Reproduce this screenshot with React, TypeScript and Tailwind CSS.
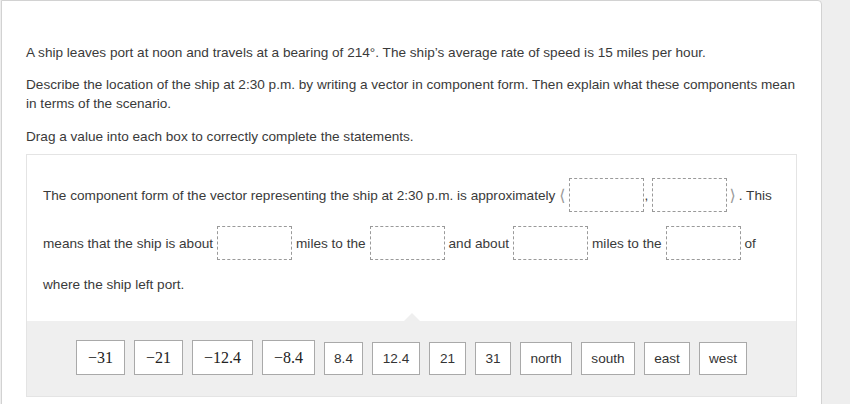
import React from "react";

const font = { fontFamily: '"Liberation Sans", Arial, sans-serif' };

function DropBox() {
  return <span className="inline-block h-[34px] w-[75px] shrink-0 border border-dashed border-[#9a9a9a] bg-white" />;
}

type Tile = { label: string; w: string; math?: boolean };

const tiles: Tile[] = [
  { label: "\u221231", w: "w-[49px]", math: true },
  { label: "\u221221", w: "w-[49px]", math: true },
  { label: "\u221212.4", w: "w-[61px]", math: true },
  { label: "\u22128.4", w: "w-[53px]", math: true },
  { label: "8.4", w: "w-[39px]" },
  { label: "12.4", w: "w-[48px]" },
  { label: "21", w: "w-[37px]" },
  { label: "31", w: "w-[36px]" },
  { label: "north", w: "w-[52px]" },
  { label: "south", w: "w-[54px]" },
  { label: "east", w: "w-[46px]" },
  { label: "west", w: "w-[48px]" },
];

export default function App() {
  return (
    <div className="flex h-[404px] w-[850px] overflow-hidden bg-[#eeeeee] pl-px" style={font}>
      <div className="h-[420px] w-[821px] rounded-tr-[4px] border border-[#d2d2d2] bg-white px-[24px] pt-[42px] text-[13.6px] leading-[19px] text-[#3a3a3a]">
        <p className="mb-[13px] whitespace-nowrap">
          A ship leaves port at noon and travels at a bearing of 214°. The ship’s average rate of speed is 15 miles per hour.
        </p>
        <p className="mb-[14px]">
          <span className="whitespace-nowrap">
            Describe the location of the ship at 2:30 p.m. by writing a vector in component form. Then explain what these components mean
          </span>
          <br />
          in terms of the scenario.
        </p>
        <p className="mb-[8px] whitespace-nowrap">Drag a value into each box to correctly complete the statements.</p>

        <div className="border border-[#e4e4e4]">
          <div className="px-[16px] pt-[23px] pb-[27px]">
            <div className="flex h-[34px] items-center whitespace-nowrap">
              <span>The component form of the vector representing the ship at 2:30 p.m. is approximately</span>
              <span className="ml-[4px] mr-[3px] text-[16px] text-[#999]" style={{ fontFamily: '"DejaVu Sans", sans-serif' }}>
                ⟨
              </span>
              <DropBox />
              <span className="w-[8px] pl-px">,</span>
              <DropBox />
              <span className="ml-[3px] mr-[3px] text-[16px] text-[#999]" style={{ fontFamily: '"DejaVu Sans", sans-serif' }}>
                ⟩
              </span>
              <span>. This</span>
            </div>
            <div className="mt-[14px] flex h-[34px] items-center whitespace-nowrap">
              <span>means that the ship is about</span>
              <span className="mx-[4px] flex"><DropBox /></span>
              <span>miles to the</span>
              <span className="mx-[4px] flex"><DropBox /></span>
              <span>and about</span>
              <span className="mx-[4px] flex"><DropBox /></span>
              <span>miles to the</span>
              <span className="mx-[4px] flex"><DropBox /></span>
              <span>of</span>
            </div>
            <div className="mt-[15px] whitespace-nowrap">where the ship left port.</div>
          </div>

          <div className="relative bg-[#efefef] pt-[19px] pb-[21px]">
            <span className="absolute left-1/2 top-[-8px] h-0 w-0 -translate-x-1/2 border-x-[8px] border-b-[8px] border-x-transparent border-b-[#efefef]" />
            <div className="flex items-end justify-center gap-[9px]">
              {tiles.map((t) =>
                t.math ? (
                  <span
                    key={t.label}
                    className={`flex h-[35px] items-center justify-center border border-[#a9a9a9] bg-white text-[16px] text-[#222] ${t.w}`}
                    style={{ fontFamily: '"Liberation Serif", "Times New Roman", serif' }}
                  >
                    {t.label}
                  </span>
                ) : (
                  <span
                    key={t.label}
                    className={`flex h-[33px] items-center justify-center border border-[#a9a9a9] bg-white text-[13.6px] text-[#333] ${t.w}`}
                  >
                    {t.label}
                  </span>
                )
              )}
            </div>
          </div>
        </div>
      </div>
    </div>
  );
}
